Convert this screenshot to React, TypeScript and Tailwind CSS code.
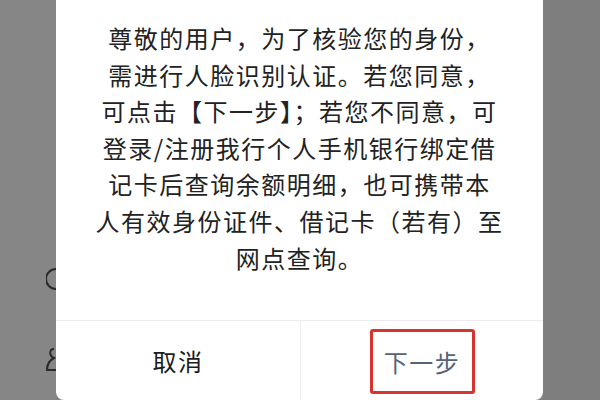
import React from "react";

const LINES = [
  "尊敬的用户，为了核验您的身份，",
  "需进行人脸识别认证。若您同意，",
  "可点击【下一步】；若您不同意，可",
  "登录/注册我行个人手机银行绑定借",
  "记卡后查询余额明细，也可携带本",
  "人有效身份证件、借记卡（若有）至",
  "网点查询。",
];

const cjk = { fontFamily: '"Noto Sans CJK SC", "Noto Sans", sans-serif' };

export default function App() {
  return (
    <div className="flex h-[400px] w-[600px] overflow-hidden bg-[#838383]" style={cjk}>
      {/* left strip, icons of the page below peek out */}
      <div className="relative flex w-[56px] shrink-0 flex-col items-end bg-[#868686]">
        <svg width="10" height="24" viewBox="0 0 10 24" className="mt-[267px]">
          <path d="M10 2 A10 10 0 0 0 10 22" fill="none" stroke="#2a2a2a" strokeWidth="2" />
        </svg>
        <svg width="10" height="26" viewBox="0 0 10 26" className="mt-[56px]">
          <path d="M8 2 C3 2 3 9 8 11 C4 13 1 17 1 23 L10 23" fill="none" stroke="#2a2a2a" strokeWidth="2" />
        </svg>
      </div>

      <div className="flex w-[487px] shrink-0 flex-col rounded-b-lg bg-white">
        <div className="flex h-[320px] flex-col items-center pt-[20px] text-[24px] leading-[36.6px] tracking-[1.5px] text-[#222]">
          {LINES.map((l) => (
            <div key={l} className="whitespace-nowrap">
              {l}
            </div>
          ))}
        </div>
        <div className="flex flex-1 border-t border-[#ececec]">
          <div className="flex w-[244px] items-center justify-center text-[24px] tracking-[1.5px] text-[#1c1c1c]">
            取消
          </div>
          <div className="flex flex-1 items-center justify-center border-l border-[#ececec]">
            <div className="mt-[2px] flex h-[65px] w-[105px] items-center justify-center rounded-[3px] border-[3px] border-[#d8332e] text-[24px] tracking-[1.5px] text-[#56627a]">
              下一步
            </div>
          </div>
        </div>
      </div>

      <div className="flex-1 bg-[#7e7e7e]" />
    </div>
  );
}
